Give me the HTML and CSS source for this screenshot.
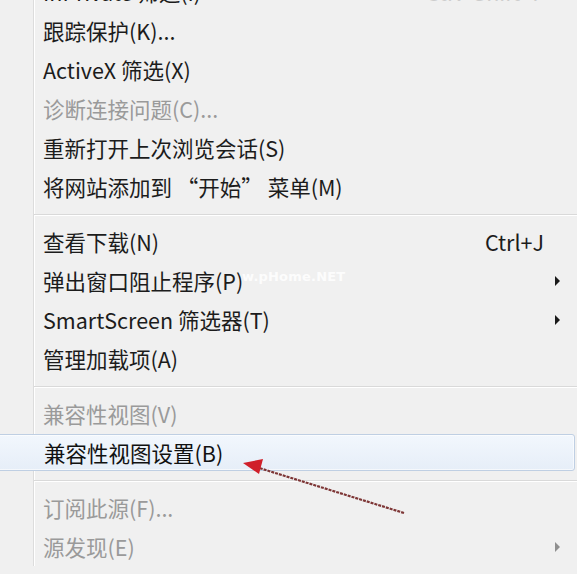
FILE: index.html
```html
<!DOCTYPE html>
<html lang="zh-CN">
<head>
<meta charset="utf-8">
<title>IE 工具菜单</title>
<link rel="stylesheet" href="styles.css">
</head>
<body>
<div class="menu">
  <div class="item"><span class="label">InPrivate 筛选(I)</span><span class="key faint">Ctrl+Shift+F</span></div>
  <div class="item"><span class="label">跟踪保护(K)...</span></div>
  <div class="item"><span class="label">ActiveX 筛选(X)</span></div>
  <div class="item disabled"><span class="label">诊断连接问题(C)...</span></div>
  <div class="item"><span class="label">重新打开上次浏览会话(S)</span></div>
  <div class="item"><span class="label">将网站添加到 “开始” 菜单(M)</span></div>
  <div class="sep"></div>
  <div class="item"><span class="label">查看下载(N)</span><span class="key">Ctrl+J</span></div>
  <div class="item"><span class="label">弹出窗口阻止程序(P)</span><span class="sub"></span></div>
  <div class="item"><span class="label">SmartScreen 筛选器(T)</span><span class="sub"></span></div>
  <div class="item"><span class="label">管理加载项(A)</span></div>
  <div class="sep"></div>
  <div class="item disabled"><span class="label">兼容性视图(V)</span></div>
  <div class="item hot"><span class="label">兼容性视图设置(B)</span></div>
  <div class="sep"></div>
  <div class="item disabled"><span class="label">订阅此源(F)...</span></div>
  <div class="item disabled"><span class="label">源发现(E)</span><span class="sub"></span></div>
</div>
<div class="watermark">w.pHome.NET</div>
<svg class="pointer" width="577" height="574" viewBox="0 0 577 574" aria-hidden="true">
  <line x1="404" y1="513" x2="256" y2="467" stroke="#7d3535" stroke-width="2.2" stroke-dasharray="3 1"/>
  <polygon points="243,463 263,459 259,474" fill="#d0202a"/>
</svg>
</body>
</html>
```
FILE: styles.css
```css
html, body {
  margin: 0;
  padding: 0;
  background: #f0f0f0;
  overflow: hidden;
}
body {
  width: 577px;
  height: 574px;
  position: relative;
  font-family: "Noto Sans CJK SC", "Noto Sans", sans-serif;
  font-size: 21.5px;
  color: #1c1c1c;
}
.menu {
  margin-top: -28px;
  display: flex;
  flex-direction: column;
  background: linear-gradient(to right,
    #f0f0f0 0, #f0f0f0 33px,
    #dcdcdc 33px, #dcdcdc 34px,
    #ffffff 34px, #ffffff 35px,
    #f0f0f0 35px);
}
.item {
  box-sizing: border-box;
  height: 39px;
  display: flex;
  align-items: center;
  padding-left: 43px;
  padding-right: 17px;
  line-height: 1;
  white-space: nowrap;
}
.label {
  flex: 1;
}
.key {
  margin-right: 16px;
}
.faint {
  color: #cdcdcd;
}
.sub {
  width: 0;
  height: 0;
  border-top: 5px solid transparent;
  border-bottom: 5px solid transparent;
  border-left: 5px solid #1a1a1a;
}
.disabled {
  color: #9a9a9a;
}
.disabled .sub {
  border-left-color: #8f8f8f;
}
.sep {
  height: 16px;
  margin-left: 34px;
  background: linear-gradient(to bottom,
    transparent 0, transparent 8px,
    #d9d9d9 8px, #d9d9d9 9px,
    #ffffff 9px, #ffffff 10px,
    transparent 10px);
}
.hot {
  height: 37px;
  margin: 1px 2px 1px -3px;
  padding-left: 46px;
  border: 1px solid #bfcfe3;
  border-radius: 3px;
  background: linear-gradient(to bottom, #f2f7fd, #e6eef8);
  box-shadow: inset 0 0 0 1px rgba(255,255,255,0.6);
  color: #111;
}
.watermark {
  position: absolute;
  left: 242px;
  top: 269px;
  font-family: "DejaVu Sans", sans-serif;
  font-weight: bold;
  font-size: 13px;
  color: rgba(255, 255, 255, 0.85);
  letter-spacing: 0.2px;
}
.pointer {
  position: absolute;
  left: 0;
  top: 0;
}
```
